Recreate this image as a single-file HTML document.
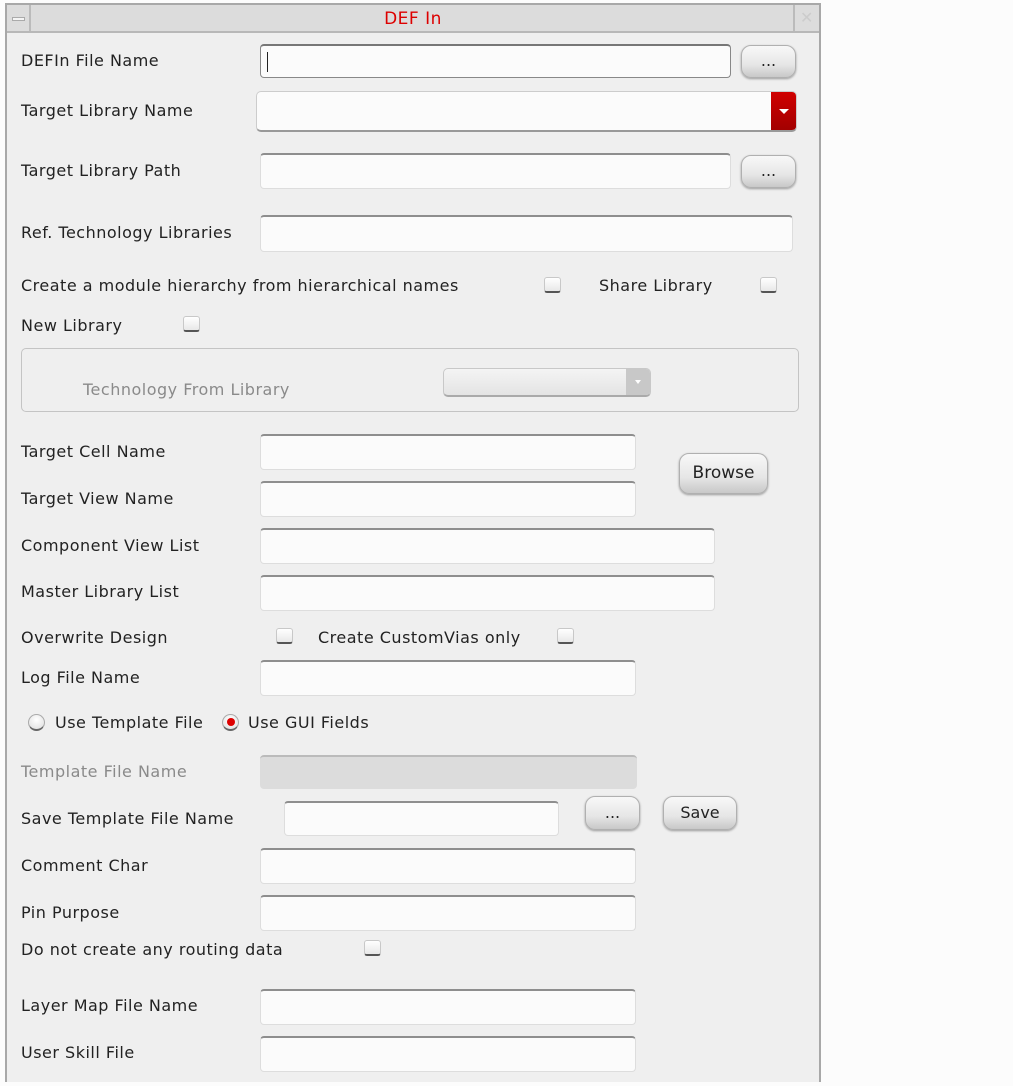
<!DOCTYPE html>
<html><head><meta charset="utf-8"><style>
*{margin:0;padding:0;box-sizing:border-box}
body{width:1013px;height:1086px;background:#fcfcfc;position:relative;overflow:hidden;font-family:"DejaVu Sans","Liberation Sans",sans-serif;font-size:16px;letter-spacing:.5px;color:#222}
.win{position:absolute;left:5px;top:3px;width:816px;height:1079px;background:#efefef;border:2px solid #a8a8a8;border-bottom:none}
.tb{position:absolute;left:0;top:0;width:812px;height:28px;background:#dcdcdc;border-bottom:2px solid #b8b8b8}
.a{position:absolute}
.l{position:absolute;white-space:nowrap;line-height:18px;transform:translateY(-9px)}
.g{color:#8a8a8a}
.in{position:absolute;background:#fbfbfb;border:1px solid #ddd;border-top:2px solid #8e8e8e;border-radius:4px}
.bt{position:absolute;border-radius:10px;background:linear-gradient(#f8f8f8,#e6e6e6 60%,#c8c8c8);border:1px solid #b0b0b0;box-shadow:0 1px 2px #999;text-align:center;color:#222;letter-spacing:0}
.cb{position:absolute;width:17px;height:16px;border-radius:3px;background:linear-gradient(#fff,#e8e8e8);border:1px solid #c8c8c8;border-bottom:2px solid #555}
</style></head><body>
<div class="win">
 <div class="tb">
  <div class="a" style="left:0;top:0;width:24px;height:26px;border-right:2px solid #bbb"><div class="a" style="left:5px;top:12px;width:13px;height:4px;background:#f4f4f4;border:1px solid #aaa"></div></div>
  <div class="a" style="left:0;width:812px;top:4px;text-align:center;color:#d00;font-size:17px">DEF In</div>
  <div class="a" style="left:786px;top:0;width:26px;height:26px;border-left:2px solid #bbb;color:#ccc;font-size:16px;text-align:center;line-height:26px">✕</div>
 </div>
</div>

<div class="l" style="left:21px;top:61px">DEFIn File Name</div>
<div class="in" style="left:260px;top:44px;width:471px;height:34px;border:1px solid #888;border-top:2px solid #777"><div class="a" style="left:6px;top:6px;width:1px;height:20px;background:#222"></div></div>
<div class="bt" style="left:741px;top:45px;width:55px;height:33px;line-height:30px">...</div>

<div class="l" style="left:21px;top:111px">Target Library Name</div>
<div class="a" style="left:256px;top:91px;width:541px;height:41px;background:#fbfbfb;border:1px solid #ccc;border-bottom:2px solid #999;border-radius:5px;overflow:hidden"><div class="a" style="right:0;top:0;width:25px;height:40px;background:linear-gradient(#d00000,#a00000)"><div class="a" style="left:8px;top:17px;width:0;height:0;border-left:5px solid transparent;border-right:5px solid transparent;border-top:5px solid #fff"></div></div></div>

<div class="l" style="left:21px;top:171px">Target Library Path</div>
<div class="in" style="left:260px;top:153px;width:471px;height:36px"></div>
<div class="bt" style="left:741px;top:155px;width:55px;height:33px;line-height:30px">...</div>

<div class="l" style="left:21px;top:233px">Ref. Technology Libraries</div>
<div class="in" style="left:260px;top:215px;width:533px;height:37px"></div>

<div class="l" style="left:21px;top:286px">Create a module hierarchy from hierarchical names</div>
<div class="cb" style="left:544px;top:277px"></div>
<div class="l" style="left:599px;top:286px">Share Library</div>
<div class="cb" style="left:760px;top:277px"></div>

<div class="l" style="left:21px;top:326px">New Library</div>
<div class="cb" style="left:183px;top:316px"></div>

<div class="a" style="left:21px;top:348px;width:778px;height:64px;border:1px solid #c4c4c4;border-radius:5px"></div>
<div class="l g" style="left:83px;top:390px">Technology From Library</div>
<div class="a" style="left:443px;top:368px;width:208px;height:29px;border-radius:5px;background:linear-gradient(#f4f4f4,#e4e4e4);border:1px solid #c8c8c8;border-bottom:2px solid #aaa;overflow:hidden"><div class="a" style="right:0;top:0;width:24px;height:28px;background:#c8c8c8"><div class="a" style="left:9px;top:11px;border-left:3px solid transparent;border-right:3px solid transparent;border-top:4px solid #fff"></div></div></div>

<div class="l" style="left:21px;top:452px">Target Cell Name</div>
<div class="in" style="left:260px;top:434px;width:376px;height:36px"></div>
<div class="l" style="left:21px;top:499px">Target View Name</div>
<div class="in" style="left:260px;top:481px;width:376px;height:36px"></div>
<div class="bt" style="left:679px;top:453px;width:89px;height:41px;line-height:38px;font-size:17px">Browse</div>

<div class="l" style="left:21px;top:546px">Component View List</div>
<div class="in" style="left:260px;top:528px;width:455px;height:36px"></div>
<div class="l" style="left:21px;top:592px">Master Library List</div>
<div class="in" style="left:260px;top:575px;width:455px;height:36px"></div>

<div class="l" style="left:21px;top:638px">Overwrite Design</div>
<div class="cb" style="left:276px;top:628px"></div>
<div class="l" style="left:318px;top:638px">Create CustomVias only</div>
<div class="cb" style="left:557px;top:628px"></div>

<div class="l" style="left:21px;top:678px">Log File Name</div>
<div class="in" style="left:260px;top:660px;width:376px;height:36px"></div>

<div class="a" style="left:28px;top:714px;width:17px;height:17px;border-radius:50%;background:radial-gradient(circle at 50% 35%,#fff,#ddd);border:1px solid #aaa;border-bottom:2px solid #666"></div>
<div class="l" style="left:55px;top:723px">Use Template File</div>
<div class="a" style="left:222px;top:714px;width:17px;height:17px;border-radius:50%;background:radial-gradient(circle at 50% 35%,#fff,#ddd);border:1px solid #aaa;border-bottom:2px solid #666"><div class="a" style="left:4px;top:3px;width:8px;height:8px;border-radius:50%;background:#d00"></div></div>
<div class="l" style="left:248px;top:723px">Use GUI Fields</div>

<div class="l g" style="left:21px;top:772px">Template File Name</div>
<div class="a" style="left:260px;top:755px;width:377px;height:34px;background:#dcdcdc;border-top:2px solid #bbb;border-radius:4px"></div>

<div class="l" style="left:21px;top:819px">Save Template File Name</div>
<div class="in" style="left:284px;top:801px;width:275px;height:35px"></div>
<div class="bt" style="left:585px;top:796px;width:55px;height:34px;line-height:32px">...</div>
<div class="bt" style="left:663px;top:796px;width:74px;height:34px;line-height:32px">Save</div>

<div class="l" style="left:21px;top:866px">Comment Char</div>
<div class="in" style="left:260px;top:848px;width:376px;height:36px"></div>
<div class="l" style="left:21px;top:913px">Pin Purpose</div>
<div class="in" style="left:260px;top:895px;width:376px;height:36px"></div>

<div class="l" style="left:21px;top:950px">Do not create any routing data</div>
<div class="cb" style="left:364px;top:940px"></div>

<div class="l" style="left:21px;top:1006px">Layer Map File Name</div>
<div class="in" style="left:260px;top:989px;width:376px;height:36px"></div>
<div class="l" style="left:21px;top:1053px">User Skill File</div>
<div class="in" style="left:260px;top:1036px;width:376px;height:36px"></div>
</body></html>
